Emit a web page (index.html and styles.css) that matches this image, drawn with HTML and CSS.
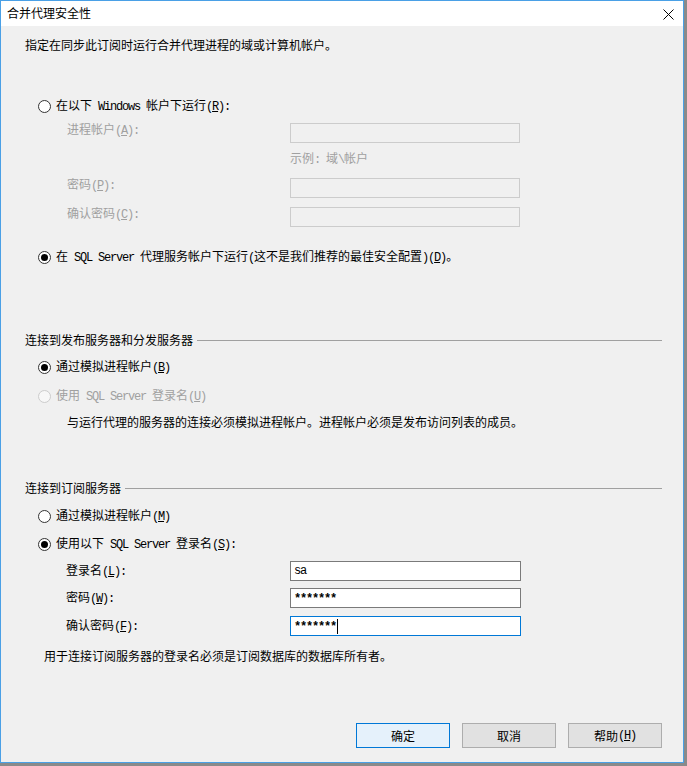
FILE: index.html
```html
<!DOCTYPE html>
<html lang="zh-CN">
<head>
<meta charset="utf-8">
<title>合并代理安全性</title>
<link rel="stylesheet" href="styles.css">
</head>
<body>
<div class="window">
  <div class="titlebar">
    <span class="title">合并代理安全性</span>
    <svg class="close" width="11" height="11" viewBox="0 0 11 11"><path d="M0.5 0.5 L10.5 10.5 M10.5 0.5 L0.5 10.5" stroke="#000" stroke-width="1" fill="none"/></svg>
  </div>
  <div class="content">
    <div class="line intro">指定在同步此订阅时运行合并代理进程的域或计算机帐户。</div>

    <div class="radio-row r1"><span class="radio"></span><span class="rtext">在以下<span class="m"> Windows </span>帐户下运行<span class="m">(<u>R</u>):</span></span></div>

    <div class="field f-acct disabled"><span class="flabel top">进程帐户<span class="m">(<u>A</u>):</span></span><span class="input dis"></span></div>
    <div class="line example disabled">示例<span class="m">: </span>域<span class="m">\</span>帐户</div>
    <div class="field f-pwd disabled"><span class="flabel top">密码<span class="m">(<u>P</u>):</span></span><span class="input dis"></span></div>
    <div class="field f-cfm disabled"><span class="flabel top">确认密码<span class="m">(<u>C</u>):</span></span><span class="input dis"></span></div>

    <div class="radio-row r2"><span class="radio checked"></span><span class="rtext">在<span class="m"> SQL Server </span>代理服务帐户下运行<span class="m">(</span>这不是我们推荐的最佳安全配置<span class="m">)(<u>D</u>)</span>。</span></div>

    <div class="group g1"><span class="gtext">连接到发布服务器和分发服务器</span></div>
    <div class="radio-row r3"><span class="radio checked"></span><span class="rtext">通过模拟进程帐户<span class="m">(<u>B</u>)</span></span></div>
    <div class="radio-row r4 disabled"><span class="radio dis"></span><span class="rtext">使用<span class="m"> SQL Server </span>登录名<span class="m">(<u>U</u>)</span></span></div>
    <div class="line note1">与运行代理的服务器的连接必须模拟进程帐户。进程帐户必须是发布访问列表的成员。</div>

    <div class="group g2"><span class="gtext">连接到订阅服务器</span></div>
    <div class="radio-row r5"><span class="radio"></span><span class="rtext">通过模拟进程帐户<span class="m">(<u>M</u>)</span></span></div>
    <div class="radio-row r6"><span class="radio checked"></span><span class="rtext">使用以下<span class="m"> SQL Server </span>登录名<span class="m">(<u>S</u>):</span></span></div>

    <div class="field lower f-login"><span class="flabel">登录名<span class="m">(<u>L</u>):</span></span><span class="input en"><span class="val">sa</span></span></div>
    <div class="field lower f-lpwd"><span class="flabel">密码<span class="m">(<u>W</u>):</span></span><span class="input en"><span class="val pw">*******</span></span></div>
    <div class="field lower f-lcfm"><span class="flabel">确认密码<span class="m">(<u>F</u>):</span></span><span class="input en focus"><span class="val pw">*******</span><span class="caret"></span></span></div>

    <div class="line note2">用于连接订阅服务器的登录名必须是订阅数据库的数据库所有者。</div>

    <div class="buttons">
      <span class="btn default">确定</span>
      <span class="btn">取消</span>
      <span class="btn">帮助<span class="m">(<u>H</u>)</span></span>
    </div>
  </div>
</div>
</body>
</html>
```

FILE: styles.css
```css
html, body {
  margin: 0;
  padding: 0;
}
body {
  background: #8a8a8a;
  width: 687px;
  height: 766px;
  overflow: hidden;
  font-family: "Noto Sans CJK SC", "Liberation Sans", sans-serif;
  font-size: 12px;
  color: #000;
}
.window {
  box-sizing: border-box;
  width: 684px;
  height: 763px;
  border: 1px solid #4aa0e6;
  background: #f0f0f0;
}
.titlebar {
  height: 25px;
  background: #fff;
  display: flex;
  align-items: center;
  justify-content: space-between;
  padding: 0 9px 0 6px;
}
.title {
  font-size: 12px;
  line-height: 16px;
  margin-top: -1px;
}
.close {
  display: block;
  margin-top: 2px;
}
.content {
  padding: 0 21px 0 24px;
}
.m {
  font-family: "Liberation Mono", monospace;
  font-size: 12px;
  letter-spacing: -1.2px;
}
u {
  text-decoration: underline;
  text-underline-offset: 1px;
}
.line {
  height: 16px;
  line-height: 16px;
  white-space: nowrap;
}
.disabled {
  color: #a0a0a0;
}
.intro { margin-top: 11px; }

.radio-row {
  display: flex;
  align-items: center;
  height: 16px;
  padding-left: 13px;
  white-space: nowrap;
}
.radio {
  box-sizing: border-box;
  width: 13px;
  height: 13px;
  border: 1px solid #333;
  border-radius: 50%;
  background: #fff;
  display: flex;
  align-items: center;
  justify-content: center;
  flex: none;
}
.radio.checked::after {
  content: "";
  width: 7px;
  height: 7px;
  border-radius: 50%;
  background: #000;
}
.radio.dis {
  border-color: #cccccc;
  background: #f7f7f7;
}
.rtext {
  margin-left: 5px;
  line-height: 16px;
}
.r1 { margin-top: 45px; }
.r2 { margin-top: 22px; }
.r3 { margin-top: 11px; }
.r4 { margin-top: 13px; }
.r5 { margin-top: 12px; }
.r6 { margin-top: 12px; }

.field {
  display: flex;
  align-items: flex-start;
  padding-left: 42px;
  white-space: nowrap;
}
.flabel {
  width: 223px;
  line-height: 12px;
  flex: none;
}
.field.lower {
  align-items: center;
  padding-left: 41px;
}
.field.lower .flabel {
  width: 224px;
  line-height: 16px;
}
.input {
  box-sizing: border-box;
  height: 20px;
  width: 230px;
  display: flex;
  align-items: center;
  padding-left: 3px;
}
.input.dis {
  background: #f0f0f0;
  border: 1px solid #cccccc;
}
.input.en {
  width: 231px;
  background: #fff;
  border: 1px solid #7a7a7a;
  color: #000;
}
.input.focus {
  border-color: #0078d7;
}
.val {
  font-family: "Liberation Mono", monospace;
  font-size: 12px;
  letter-spacing: -1.2px;
  line-height: 14px;
}
.val.pw {
  font-weight: bold;
  padding-top: 2px;
}
.caret {
  width: 1px;
  height: 15px;
  background: #000;
  margin-left: 1px;
}
.f-acct { margin-top: 9px; }
.example { margin-top: 7px; padding-left: 265px; }
.f-pwd { margin-top: 12px; }
.f-cfm { margin-top: 9px; }

.group {
  display: flex;
  align-items: center;
  height: 16px;
  line-height: 16px;
  white-space: nowrap;
}
.group::after {
  content: "";
  flex: 1;
  height: 1px;
  background: #a0a0a0;
  margin-left: 4px;
  margin-top: 1px;
}
.g1 { margin-top: 67px; }
.g2 { margin-top: 50px; }

.note1 { margin-top: 10px; padding-left: 42px; }

.f-login { margin-top: 9px; }
.f-lpwd { margin-top: 7px; }
.f-lcfm { margin-top: 8px; }
.note2 { margin-top: 12px; padding-left: 19px; }

.buttons {
  margin-top: 59px;
  display: flex;
  justify-content: flex-end;
  gap: 12px;
}
.btn {
  box-sizing: border-box;
  width: 94px;
  height: 25px;
  border: 1px solid #adadad;
  background: #e1e1e1;
  display: flex;
  align-items: center;
  justify-content: center;
  line-height: 16px;
}
.btn.default {
  border-color: #0078d7;
  background: #e5f1fb;
}
```
